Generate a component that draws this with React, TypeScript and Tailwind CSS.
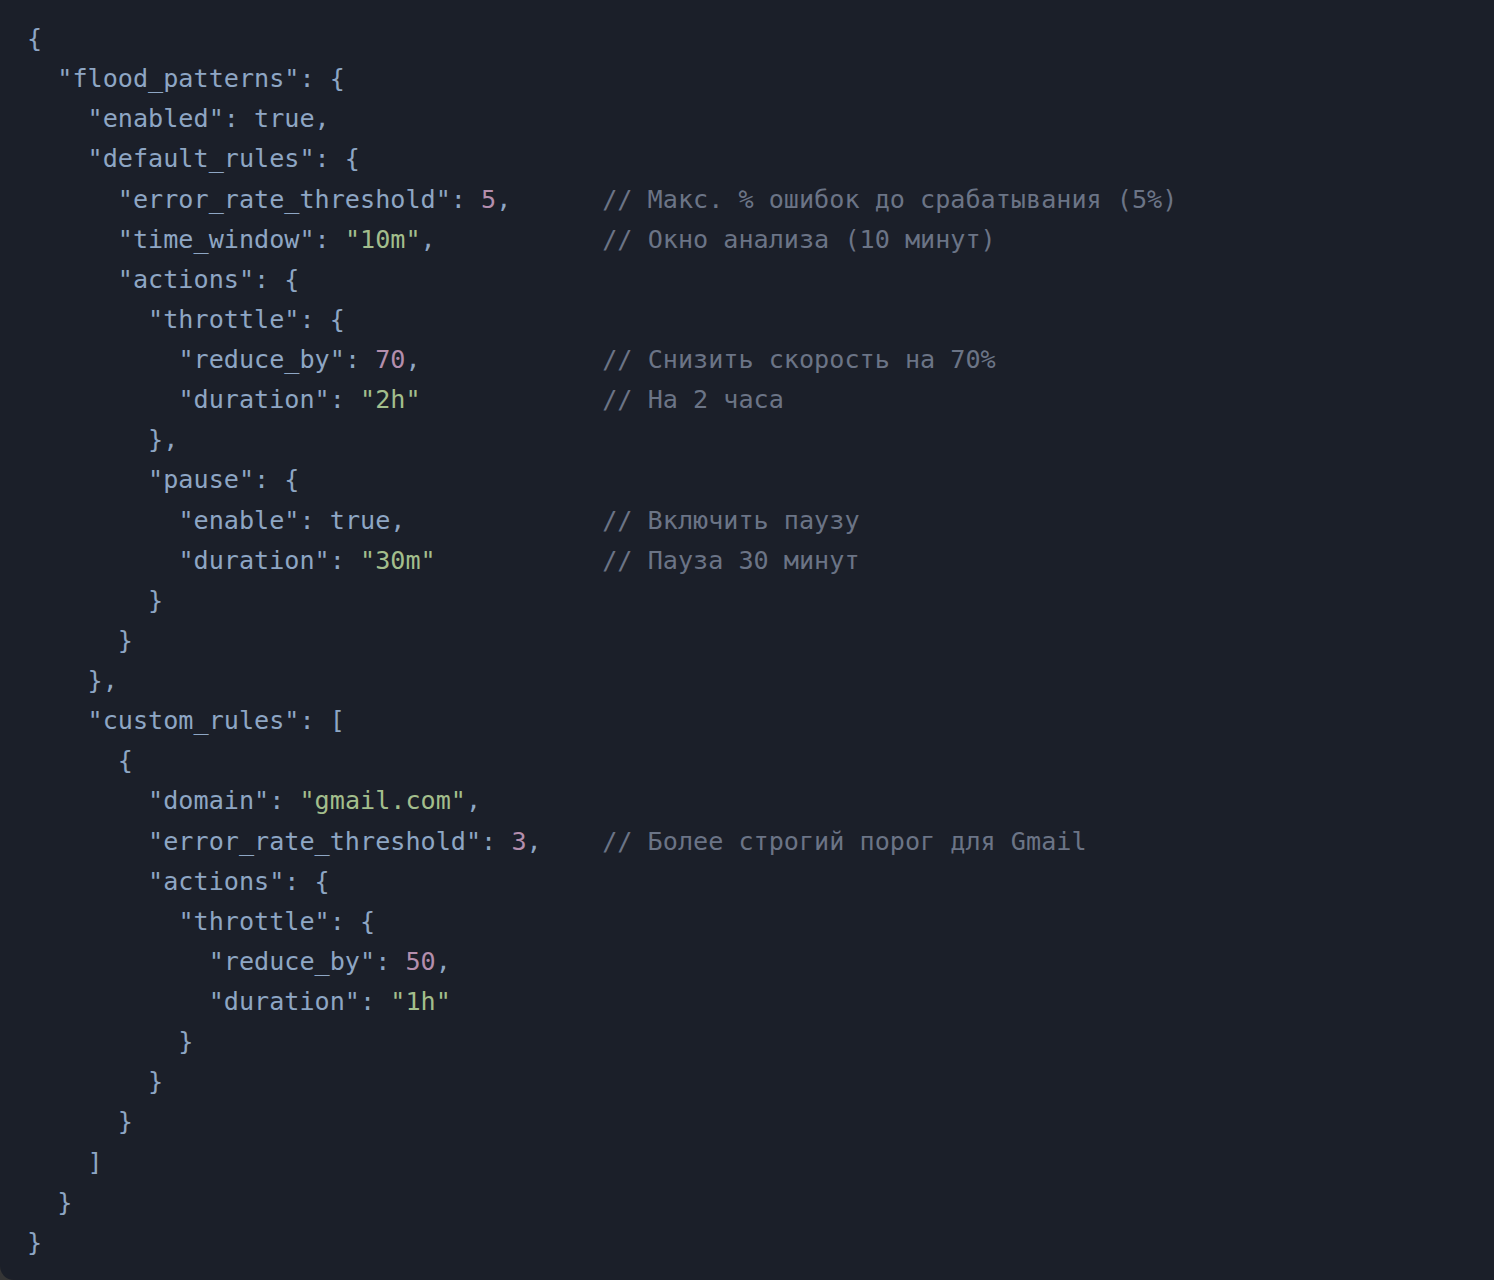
import React from "react";

const CODE: [string, string?][] = [
  ["{"],
  ['  "flood_patterns": {'],
  ['    "enabled": true,'],
  ['    "default_rules": {'],
  ['      "error_rate_threshold": 5,', "// Макс. % ошибок до срабатывания (5%)"],
  ['      "time_window": "10m",', "// Окно анализа (10 минут)"],
  ['      "actions": {'],
  ['        "throttle": {'],
  ['          "reduce_by": 70,', "// Снизить скорость на 70%"],
  ['          "duration": "2h"', "// На 2 часа"],
  ["        },"],
  ['        "pause": {'],
  ['          "enable": true,', "// Включить паузу"],
  ['          "duration": "30m"', "// Пауза 30 минут"],
  ["        }"],
  ["      }"],
  ["    },"],
  ['    "custom_rules": ['],
  ["      {"],
  ['        "domain": "gmail.com",'],
  ['        "error_rate_threshold": 3,', "// Более строгий порог для Gmail"],
  ['        "actions": {'],
  ['          "throttle": {'],
  ['            "reduce_by": 50,'],
  ['            "duration": "1h"'],
  ["          }"],
  ["        }"],
  ["      }"],
  ["    ]"],
  ["  }"],
  ["}"],
];

const COMMENT_COL = 38;

function tokenize(code: string) {
  const out: { t: string; k: "p" | "s" | "n" }[] = [];
  const re = /("[^"]*")(?=\s*:)|("[^"]*")|(\b\d+\b)/g;
  let last = 0;
  let m: RegExpExecArray | null;
  while ((m = re.exec(code))) {
    if (m.index > last) out.push({ t: code.slice(last, m.index), k: "p" });
    if (m[1]) out.push({ t: m[1], k: "p" });
    else if (m[2]) out.push({ t: m[2], k: "s" });
    else out.push({ t: m[3], k: "n" });
    last = m.index + m[0].length;
  }
  if (last < code.length) out.push({ t: code.slice(last), k: "p" });
  return out;
}

export default function App() {
  return (
    <div className="min-h-[1280px] w-full bg-[#353535]">
      <div
        className="min-h-[1280px] w-full bg-[#1b1f29] rounded-bl-[14px] pt-[19px] pl-[27px]"
        style={{ fontFamily: '"DejaVu Sans Mono", "Liberation Mono", monospace' }}
      >
        {CODE.map(([code, comment], i) => {
          const padded = comment ? code.padEnd(COMMENT_COL, " ") : code;
          return (
            <div key={i} className="whitespace-pre text-[25.15px] leading-[40.12px] text-[#8ea6c4]">
              {tokenize(padded).map((tk, j) => (
                <span
                  key={j}
                  className={
                    tk.k === "s" ? "text-[#a3be8c]" : tk.k === "n" ? "text-[#b48ead]" : "text-[#8ea6c4]"
                  }
                >
                  {tk.t}
                </span>
              ))}
              {comment ? <span className="text-[#6b7486]">{comment}</span> : null}
            </div>
          );
        })}
      </div>
    </div>
  );
}
